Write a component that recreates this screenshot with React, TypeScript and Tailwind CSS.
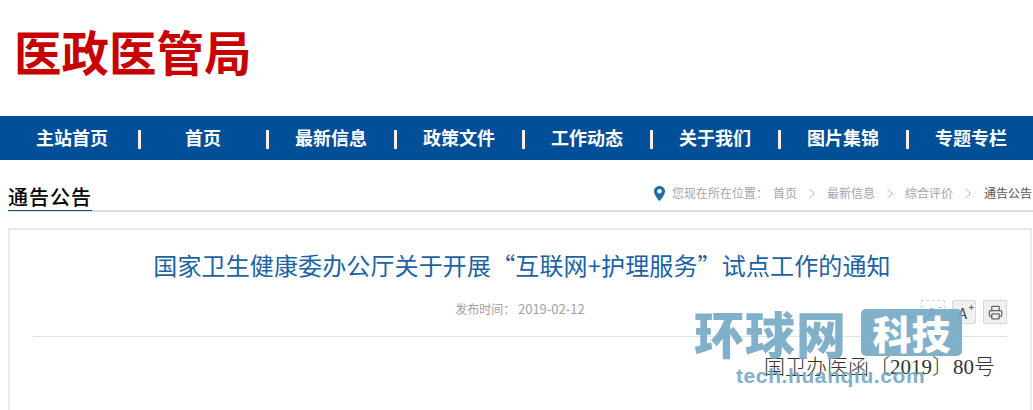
import { Printer } from 'lucide-react'

const sans = "font-['Noto_Sans_CJK_SC','Liberation_Sans',sans-serif]"

const navItems = ['主站首页', '首页', '最新信息', '政策文件', '工作动态', '关于我们', '图片集锦', '专题专栏']
const crumbs = ['最新信息', '综合评价']

function Chevron() {
    return (
        <svg width="6" height="11" viewBox="0 0 6 11" className="mx-[12px]" fill="none" stroke="#b5b5b5" strokeWidth="1">
            <path d="M0.5 1l5 4.5L0.5 10" />
        </svg>
    )
}

function Pin() {
    return (
        <svg width="11" height="15" viewBox="0 0 11 15" className="mr-[7px]">
            <path d="M5.5 0C2.4 0 0 2.4 0 5.4 0 9.2 5.5 15 5.5 15S11 9.2 11 5.4C11 2.4 8.6 0 5.5 0z" fill="#1d6ea8" />
            <circle cx="5.5" cy="5.3" r="2.2" fill="#fff" />
        </svg>
    )
}

function Watermark() {
    return (
        <div className="absolute left-[694px] top-[308px] w-[270px] text-[#74a9c3] opacity-90">
            <div className="flex items-center h-[48px]">
                <span className="w-[156px] text-[50px] leading-[48px] font-black tracking-[1px] whitespace-nowrap">环球网</span>
                <span className="ml-[11px] w-[101px] h-[47px] rounded-[5px] bg-[#74a9c3] text-white text-[39px] leading-[47px] font-black text-center">科技</span>
            </div>
            <div className="mt-[8px] ml-[42px] text-[21px] leading-[24px] font-bold font-['Liberation_Sans',sans-serif] whitespace-nowrap tracking-[0.6px]">
                tech.huanqiu.com
            </div>
        </div>
    )
}

export default function App() {
    return (
        <div className={`relative w-[1033px] h-[410px] overflow-hidden bg-white ${sans}`}>
            <header className="h-[116px] pl-[14px] pt-[24px]">
                <div className="text-[47.5px] leading-[54px] font-bold text-[#c90000] whitespace-nowrap">医政医管局</div>
            </header>

            <nav className="h-[44px] bg-[#014f96] pl-[8px] flex items-center">
                {navItems.map((item, index) => (
                    <div
                        key={item}
                        className={`relative w-[128px] h-[44px] text-center text-white text-[18px] leading-[42px] font-bold ${index > 0 ? 'pl-[6px]' : ''}`}
                    >
                        {item}
                        {index < navItems.length - 1 && (
                            <span className="absolute left-[130px] top-[14px] w-[3px] h-[19px] bg-[#f4f1ea]" />
                        )}
                    </div>
                ))}
            </nav>

            <div className="mt-[24px] ml-[8px] h-[28px] flex justify-between border-b-2 border-[#dfdfdf]">
                <h2 className="h-[27px] w-[84px] border-b border-[#014f96] text-[20px] leading-[25px] font-medium text-black tracking-[1px] whitespace-nowrap">
                    通告公告
                </h2>
                <div className="flex items-center h-[18px] pr-[1px] text-[12px] text-[#a5a5a5] whitespace-nowrap">
                    <Pin />
                    <span>您现在所在位置：</span>
                    <span className="ml-[5px]">首页</span>
                    {crumbs.map(c => (
                        <span key={c} className="flex items-center">
                            <Chevron />
                            <span>{c}</span>
                        </span>
                    ))}
                    <Chevron />
                    <span className="ml-[1px] text-[#555]">通告公告</span>
                </div>
            </div>

            <main className="mt-[16px] ml-[8px] mr-[1px] h-[200px] border-2 border-b-0 border-[#eaeaea] px-[23px]">
                <h1 className="pt-[18px] pl-[4px] text-center text-[24px] leading-[34px] tracking-[0.13px] text-[#1c63a3] whitespace-nowrap">
                    国家卫生健康委办公厅关于开展“互联网+护理服务”试点工作的通知
                </h1>
                <div className="relative mt-[18px] h-[37px] border-b border-[#e2e2e2] text-center text-[12px] leading-[18px] text-[#a0a0a0]">
                    发布时间： <span className="text-[13px]">2019-02-12</span>
                    <div className="absolute right-0 top-0 flex gap-[7px]">
                        <div className="relative w-[24px] h-[24px] border border-dashed border-[#d8d8d8] text-[#999] text-[15px] leading-[24px] pr-[3px]">
                            A<span className="absolute right-[2px] top-[-2px] text-[10px] leading-[14px]">-</span>
                        </div>
                        <div className="relative w-[24px] h-[24px] border border-[#d8d8d8] rounded-[2px] bg-[#f0f0f0] text-[#444] text-[15px] leading-[24px] pr-[3px]">
                            A<span className="absolute right-[1px] top-[0px] text-[10px] leading-[12px]">+</span>
                        </div>
                        <div className="w-[24px] h-[24px] border border-[#d8d8d8] rounded-[2px] bg-[#f0f0f0] flex items-center justify-center">
                            <Printer size={15} className="text-[#666]" />
                        </div>
                    </div>
                </div>
                <p className="mt-[16px] pr-[12px] text-right text-[21px] leading-[28px] text-[#333] font-light font-['Liberation_Serif','Noto_Sans_CJK_SC',serif] whitespace-nowrap">
                    国卫办医函〔2019〕80号
                </p>
            </main>

            <Watermark />
        </div>
    )
}
